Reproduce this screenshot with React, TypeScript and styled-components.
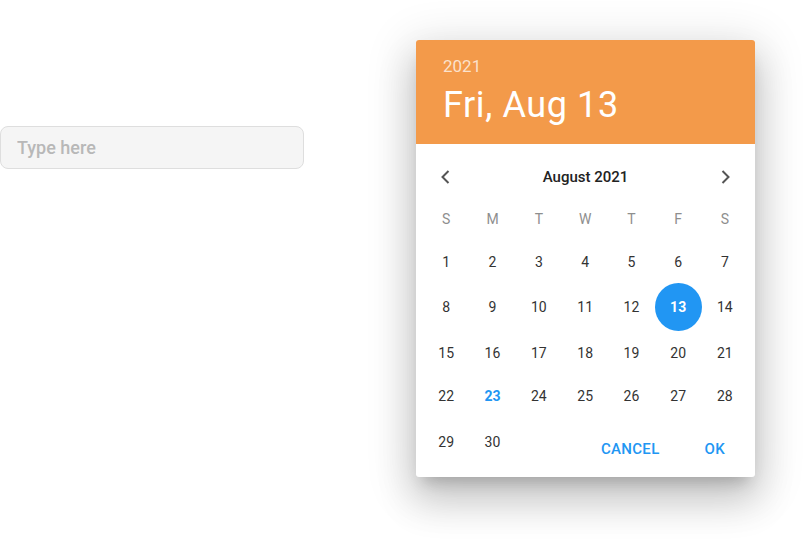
import styled, { createGlobalStyle } from "styled-components";

const GlobalStyle = createGlobalStyle`
  html, body {
    margin: 0;
    padding: 0;
    background: #ffffff;
    font-family: Roboto, "Liberation Sans", sans-serif;
  }
`;

const Page = styled.div`
  display: flex;
  align-items: flex-start;
  width: 806px;
  height: 544px;
  overflow: hidden;
`;

const TextField = styled.input`
  box-sizing: border-box;
  margin-top: 126px;
  width: 304px;
  height: 43px;
  padding: 0 16px;
  border: 1px solid #dedede;
  border-radius: 8px;
  background: #f5f5f5;
  font-family: Roboto, "Liberation Sans", sans-serif;
  font-size: 18px;
  font-weight: 500;
  color: #333;
  outline: none;

  &::placeholder {
    color: #b8b8b8;
  }
`;

const Dialog = styled.div`
  margin: 40px 0 0 112px;
  width: 339px;
  background: #ffffff;
  border-radius: 3px;
  overflow: hidden;
  box-shadow: 0 11px 15px -7px rgba(0, 0, 0, 0.2),
    0 24px 38px 3px rgba(0, 0, 0, 0.14), 0 9px 46px 8px rgba(0, 0, 0, 0.12);
`;

const Header = styled.div`
  display: flex;
  flex-direction: column;
  height: 104px;
  box-sizing: border-box;
  padding: 16px 27px 0;
  background: #f39a4a;
  color: #ffffff;
`;

const Year = styled.div`
  font-size: 17px;
  line-height: 20px;
  color: rgba(255, 255, 255, 0.72);
`;

const DateTitle = styled.div`
  margin-top: 8px;
  font-size: 36px;
  line-height: 42px;
  font-weight: 400;
  letter-spacing: 0.6px;
`;

const Body = styled.div`
  padding: 12px 7px 10px;
`;

const MonthNav = styled.div`
  display: flex;
  align-items: center;
  justify-content: space-between;
  height: 42px;
`;

const ArrowButton = styled.button`
  display: flex;
  align-items: center;
  justify-content: center;
  width: 46px;
  height: 42px;
  padding: 0;
  border: none;
  background: transparent;
  color: #555555;
`;

const MonthLabel = styled.div`
  font-size: 15px;
  font-weight: 500;
  color: #222222;
`;

const Grid = styled.div`
  display: grid;
  grid-template-columns: repeat(7, 1fr);
  align-items: center;
`;

const WeekDay = styled.div`
  display: flex;
  align-items: center;
  justify-content: center;
  height: 42px;
  font-size: 14px;
  color: #8e8e8e;
`;

const Day = styled.div<{ selected?: boolean; today?: boolean }>`
  display: flex;
  align-items: center;
  justify-content: center;
  justify-self: center;
  width: ${({ selected }) => (selected ? "47px" : "46px")};
  height: ${({ selected }) => (selected ? "48px" : "43px")};
  border-radius: 50%;
  font-size: 14px;
  font-weight: ${({ selected, today }) => (selected || today ? 700 : 400)};
  color: ${({ selected, today }) =>
    selected ? "#ffffff" : today ? "#2196f3" : "#333333"};
  background: ${({ selected }) => (selected ? "#2196f3" : "transparent")};
`;

const Actions = styled.div`
  grid-column: 3 / 8;
  display: flex;
  justify-content: flex-end;
  gap: 27px;
  margin-top: 14px;
  padding-right: 14px;
  height: 36px;
`;

const ActionButton = styled.button`
  padding: 0 9px;
  border: none;
  background: transparent;
  font-family: Roboto, "Liberation Sans", sans-serif;
  font-size: 15px;
  font-weight: 500;
  letter-spacing: 0.3px;
  text-transform: uppercase;
  color: #2196f3;
`;

const weekDays = ["S", "M", "T", "W", "T", "F", "S"];
const days = Array.from({ length: 30 }, (_, i) => i + 1);

function Chevron({ dir }: { dir: "left" | "right" }) {
  return (
    <svg width="14" height="16" viewBox="0 0 14 16">
      <path
        d={dir === "left" ? "M9.5 2 L3.5 8 L9.5 14" : "M4.5 2 L10.5 8 L4.5 14"}
        fill="none"
        stroke="currentColor"
        strokeWidth="2"
      />
    </svg>
  );
}

export default function App() {
  return (
    <Page>
      <GlobalStyle />
      <TextField placeholder="Type here" />
      <Dialog>
        <Header>
          <Year>2021</Year>
          <DateTitle>Fri, Aug 13</DateTitle>
        </Header>
        <Body>
          <MonthNav>
            <ArrowButton>
              <Chevron dir="left" />
            </ArrowButton>
            <MonthLabel>August 2021</MonthLabel>
            <ArrowButton>
              <Chevron dir="right" />
            </ArrowButton>
          </MonthNav>
          <Grid>
            {weekDays.map((d, i) => (
              <WeekDay key={i}>{d}</WeekDay>
            ))}
            {days.map((d) => (
              <Day key={d} selected={d === 13} today={d === 23}>
                {d}
              </Day>
            ))}
            <Actions>
              <ActionButton>Cancel</ActionButton>
              <ActionButton>OK</ActionButton>
            </Actions>
          </Grid>
        </Body>
      </Dialog>
    </Page>
  );
}
